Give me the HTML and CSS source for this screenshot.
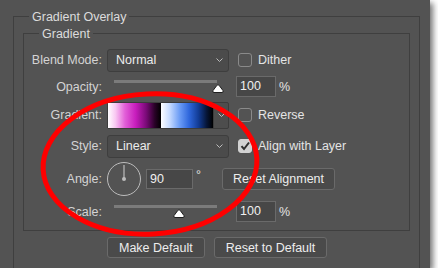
FILE: index.html
```html
<!DOCTYPE html>
<html lang="en">
<head>
    <meta charset="UTF-8">
    <meta name="viewport" content="width=device-width, initial-scale=1.0">
    <title>Gradient Overlay</title>
    <link rel="stylesheet" href="styles.css">
</head>
<body>
    <div class="panel">
        <fieldset class="group outer">
            <legend>Gradient Overlay</legend>
            <fieldset class="group inner">
                <legend>Gradient</legend>
                <div class="rows">
                    <label class="lbl">Blend Mode:</label>
                    <div class="select">
                        <span>Normal</span>
                        <svg class="chev" width="7" height="4" viewBox="0 0 7 4"><polyline points="0.5,0.5 3.5,3.5 6.5,0.5"/></svg>
                    </div>
                    <label class="check"><span class="box"></span>Dither</label>

                    <label class="lbl">Opacity:</label>
                    <div class="slider">
                        <div class="track"></div>
                        <svg class="thumb" style="left: 100%;" width="12" height="9" viewBox="0 0 12 9"><path d="M5 1.2 Q6 0 7 1.2 L11 6.6 Q11.8 8.5 10 8.5 L2 8.5 Q0.2 8.5 1 6.6 Z"/></svg>
                    </div>
                    <div class="num"><span class="field">100</span><span>%</span></div>

                    <label class="lbl">Gradient:</label>
                    <div class="gradient">
                        <div class="ramp"><span class="pink"></span><span class="blue"></span></div>
                        <div class="drop">
                            <svg class="chev" width="7" height="4" viewBox="0 0 7 4"><polyline points="0.5,0.5 3.5,3.5 6.5,0.5"/></svg>
                        </div>
                    </div>
                    <label class="check"><span class="box"></span>Reverse</label>

                    <label class="lbl">Style:</label>
                    <div class="select">
                        <span>Linear</span>
                        <svg class="chev" width="7" height="4" viewBox="0 0 7 4"><polyline points="0.5,0.5 3.5,3.5 6.5,0.5"/></svg>
                    </div>
                    <label class="check"><span class="box checked"><svg width="12" height="12" viewBox="0 0 12 12"><path d="M2.5 6.2 L5 9 L10 2.5"/></svg></span>Align with Layer</label>

                    <label class="lbl">Angle:</label>
                    <div class="angle">
                        <svg class="dial" width="34" height="34" viewBox="0 0 34 34">
                            <circle cx="17" cy="17" r="16.5" fill="none"/>
                            <line x1="17" y1="17" x2="17" y2="3"/>
                            <circle class="dot" cx="17" cy="17" r="2"/>
                        </svg>
                        <span class="field wide">90</span>
                        <span class="deg">°</span>
                        <button type="button" class="btn">Reset Alignment</button>
                    </div>

                    <label class="lbl">Scale:</label>
                    <div class="slider">
                        <div class="track"></div>
                        <svg class="thumb" style="left: 62%;" width="12" height="9" viewBox="0 0 12 9"><path d="M5 1.2 Q6 0 7 1.2 L11 6.6 Q11.8 8.5 10 8.5 L2 8.5 Q0.2 8.5 1 6.6 Z"/></svg>
                    </div>
                    <div class="num"><span class="field">100</span><span>%</span></div>
                </div>
            </fieldset>
            <div class="actions">
                <button type="button" class="btn">Make Default</button>
                <button type="button" class="btn">Reset to Default</button>
            </div>
        </fieldset>
        <svg class="mark" width="430" height="268" viewBox="0 0 430 268">
            <ellipse cx="150" cy="164" rx="107" ry="70" transform="rotate(-3 150 164)"/>
        </svg>
    </div>
</body>
</html>
```

FILE: styles.css
```css
body {
    margin: 0;
    background: #ffffff;
    font-family: "Liberation Sans", Arial, sans-serif;
    font-size: 12.5px;
    line-height: 14px;
    color: #d4d4d4;
}
.panel {
    position: relative;
    width: 430px;
    height: 268px;
    background: #535353;
    overflow: hidden;
    box-shadow: 3px 3px 6px rgba(0, 0, 0, 0.55);
}
.group {
    margin: 0;
    min-width: 0;
    border: 1px solid #3f3f3f;
}
.group legend {
    padding: 2px 3px 0;
    line-height: 14px;
    color: #dcdcdc;
}
.outer {
    margin: 8px 10px 0 13px;
    padding: 1px 9px 40px;
    border-bottom: none;
}
.outer > legend {
    margin-left: 6px;
}
.inner {
    padding: 6px 0 2px;
}
.inner > legend {
    margin-left: 15px;
}
.rows {
    display: grid;
    grid-template-columns: 83px 129px 1fr;
    grid-template-rows: 26px 27px 30px 32px 33px 33px;
    align-items: center;
}
.lbl {
    text-align: right;
    padding-right: 5px;
}
.select {
    width: 122px;
    height: 23px;
    box-sizing: border-box;
    display: flex;
    align-items: center;
    justify-content: space-between;
    padding: 0 5px 0 8px;
    background: #4b4b4b;
    border: 1px solid #3e3e3e;
    border-radius: 3px;
    color: #ececec;
}
.chev polyline {
    fill: none;
    stroke: #bdbdbd;
    stroke-width: 1;
}
.check {
    display: flex;
    align-items: center;
    gap: 6px;
    margin-left: 2px;
    color: #e4e4e4;
}
.box {
    width: 14px;
    height: 14px;
    box-sizing: border-box;
    border: 1px solid #8a8a8a;
    border-radius: 3px;
    display: flex;
    align-items: center;
    justify-content: center;
}
.box.checked {
    background: #d2d2d2;
    border-color: #d2d2d2;
}
.box.checked path {
    fill: none;
    stroke: #2e2e2e;
    stroke-width: 2;
}
.slider {
    position: relative;
    width: 103px;
    height: 13px;
    margin-left: 7px;
}
.track {
    height: 3px;
    background: #7b7b7b;
}
.thumb {
    position: absolute;
    top: 4px;
    margin-left: -5px;
}
.thumb path {
    fill: #ffffff;
    stroke: #1e1e1e;
    stroke-width: 1;
}
.num {
    display: flex;
    align-items: center;
    gap: 3px;
    color: #e4e4e4;
}
.field {
    width: 40px;
    height: 21px;
    box-sizing: border-box;
    padding-left: 3px;
    border: 1px solid #6a6a6a;
    background: #474747;
    color: #f0f0f0;
    line-height: 19px;
}
.field.wide {
    width: 47px;
    height: 20px;
    line-height: 18px;
    margin-left: 5px;
}
.gradient {
    width: 122px;
    height: 27px;
    box-sizing: border-box;
    display: flex;
    border: 1px solid #3c3c3c;
    border-radius: 2px;
    background: #4d4d4d;
}
.ramp {
    width: 105px;
    display: flex;
}
.ramp span {
    flex: 1;
}
.pink {
    background: linear-gradient(to right, #ffffff 0%, #f9c8f2 14%, #e25fd8 32%, #c81dbd 52%, #7a0a78 72%, #2a0228 88%, #000000 100%);
}
.blue {
    background: linear-gradient(to right, #ffffff 0%, #c8dcff 16%, #6b9cf5 36%, #2f67dc 54%, #123c96 72%, #061536 88%, #000000 100%);
}
.drop {
    flex: 1;
    display: flex;
    align-items: center;
    justify-content: center;
    border-left: 1px solid #3c3c3c;
}
.angle {
    grid-column: 2 / 4;
    display: flex;
    align-items: center;
}
.dial circle {
    stroke: #bcbcbc;
    stroke-width: 1;
}
.dial line {
    stroke: #bcbcbc;
    stroke-width: 1.2;
}
.dial .dot {
    fill: #bcbcbc;
    stroke: none;
}
.deg {
    align-self: flex-start;
    margin: 6px 0 0 3px;
    color: #e4e4e4;
}
.btn {
    height: 22px;
    padding: 0 10px;
    background: #4a4a4a;
    border: 1px solid #6a6a6a;
    border-radius: 3px;
    color: #ededed;
    font: inherit;
}
.angle .btn {
    margin-left: 21px;
}
.actions {
    display: flex;
    gap: 9px;
    margin-top: 6px;
    padding-left: 84px;
}
.actions .btn {
    height: 21px;
    padding: 0 11px;
}
.mark {
    position: absolute;
    left: 0;
    top: 0;
    pointer-events: none;
}
.mark ellipse {
    fill: none;
    stroke: #ff0000;
    stroke-width: 5;
}
```
